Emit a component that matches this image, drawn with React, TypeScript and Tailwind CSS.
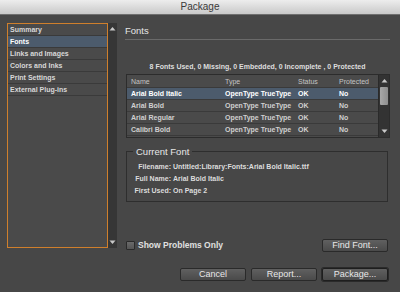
const sections = ['Summary', 'Fonts', 'Links and Images', 'Colors and Inks', 'Print Settings', 'External Plug-ins']

const fonts = [
  { name: 'Arial Bold Italic', type: 'OpenType TrueType', status: 'OK', prot: 'No' },
  { name: 'Arial Bold', type: 'OpenType TrueType', status: 'OK', prot: 'No' },
  { name: 'Arial Regular', type: 'OpenType TrueType', status: 'OK', prot: 'No' },
  { name: 'Calibri Bold', type: 'OpenType TrueType', status: 'OK', prot: 'No' },
]

const Up = () => (
  <svg width="7" height="5" viewBox="0 0 7 5">
    <path d="M0.5 4.5 L3.5 1 L6.5 4.5 Z" fill="#c8c8c8" />
  </svg>
)

const Down = () => (
  <svg width="7" height="5" viewBox="0 0 7 5">
    <path d="M0.5 0.5 L3.5 4 L6.5 0.5 Z" fill="#c8c8c8" />
  </svg>
)

const Button = ({ label, primary }: { label: string; primary?: boolean }) => (
  <button
    className={
      primary
        ? 'w-[66px] h-[13px] flex items-center justify-center rounded-[2px] border border-[#1e1e1e] bg-gradient-to-b from-[#606060] to-[#4a4a4a] text-[9px] leading-none text-[#e8e8e8] shadow-[0_0_0_1px_#2a2a2a]'
        : 'w-[66px] h-[13px] flex items-center justify-center rounded-[2px] border border-[#2a2a2a] bg-gradient-to-b from-[#606060] to-[#4a4a4a] text-[9px] leading-none text-[#e8e8e8]'
    }
  >
    {label}
  </button>
)

export default function App() {
  return (
    <div className="w-[400px] h-[292px] bg-[#474747] flex flex-col font-['Liberation_Sans',Arial,sans-serif] overflow-hidden">
      {/* title bar */}
      <div className="h-[15px] shrink-0 flex items-center justify-center bg-gradient-to-b from-[#ededed] to-[#c9c9c9] border-b border-[#6f6f6f] text-[10px] leading-none text-[#3a3a3a]">
        Package
      </div>

      <div className="flex px-[7px] pt-[8px]">
        {/* left list */}
        <div className="w-[110px] h-[225px] flex shrink-0">
          <div className="w-[101px] h-full border border-[#cf7f2c] bg-[#4a4a4a]">
            {sections.map((s, i) => (
              <div
                key={s}
                className={
                  i === 1
                    ? 'h-[12px] flex items-center pl-[2px] text-[7px] leading-none font-bold text-white bg-[#4c5b6c] border-b border-[#3a3a3a]'
                    : 'h-[12px] flex items-center pl-[2px] text-[7px] leading-none font-bold text-[#d8d8d8] border-b border-[#3a3a3a]'
                }
              >
                {s}
              </div>
            ))}
          </div>
          <div className="w-[9px] h-full bg-[#363636] flex flex-col items-center justify-between py-[3px]">
            <Up />
            <Down />
          </div>
        </div>

        {/* right panel */}
        <div className="ml-[8px] w-[265px] flex flex-col">
          <div className="h-[17px] border-b border-[#6a6a6a] flex items-center text-[9.5px] leading-none text-[#e6e6e6]">
            Fonts
          </div>

          <div className="mt-[21px] h-[10px] flex items-center justify-center text-[7px] leading-none text-[#dedede] font-bold">
            8 Fonts Used, 0 Missing, 0 Embedded, 0 Incomplete , 0 Protected
          </div>

          {/* table */}
          <div className="mt-[3px] ml-[1px] w-[264px] h-[64px] border border-[#2c2c2c] bg-[#4a4a4a] flex">
            <div className="flex-1 flex flex-col">
              <div className="h-[13px] grid grid-cols-[94px_73px_41px_1fr] items-center pl-[4px] text-[7px] leading-none text-[#c4c4c4] border-b border-[#3a3a3a]">
                <span>Name</span>
                <span>Type</span>
                <span>Status</span>
                <span>Protected</span>
              </div>
              {fonts.map((f, i) => (
                <div
                  key={f.name}
                  className={
                    i === 0
                      ? 'h-[12px] grid grid-cols-[94px_73px_41px_1fr] items-center pl-[4px] text-[7px] leading-none font-bold text-white bg-[#4c5b6c] border-b border-[#3a3a3a]'
                      : 'h-[12px] grid grid-cols-[94px_73px_41px_1fr] items-center pl-[4px] text-[7px] leading-none font-bold text-[#d0d0d0] border-b border-[#3a3a3a]'
                  }
                >
                  <span>{f.name}</span>
                  <span className="whitespace-nowrap">{f.type}</span>
                  <span>{f.status}</span>
                  <span>{f.prot}</span>
                </div>
              ))}
            </div>
            <div className="w-[11px] bg-[#333333] border-l border-[#2a2a2a] flex flex-col items-center pt-[3px] pb-[3px]">
              <Up />
              <div className="mt-[4px] w-[8px] h-[18px] rounded-[1px] bg-gradient-to-r from-[#a8a8a8] to-[#8e8e8e]" />
              <div className="flex-1" />
              <Down />
            </div>
          </div>

          {/* current font */}
          <fieldset className="mt-[8px] ml-[1px] w-[262px] border border-[#2e2e2e] pb-[5px]">
            <legend className="ml-[6px] px-[3px] text-[9.5px] leading-[11px] text-[#e6e6e6]">Current Font</legend>
            <div className="mt-[3px] grid grid-cols-[44px_1fr] text-[7px] leading-none font-bold text-[#dcdcdc]">
              <span className="h-[12px] flex items-center justify-end">Filename:</span>
              <span className="h-[12px] flex items-center pl-[2px]">Untitled:Library:Fonts:Arial Bold Italic.ttf</span>
              <span className="h-[12px] flex items-center justify-end">Full Name:</span>
              <span className="h-[12px] flex items-center pl-[2px]">Arial Bold Italic</span>
              <span className="h-[12px] flex items-center justify-end">First Used:</span>
              <span className="h-[12px] flex items-center pl-[2px]">On Page 2</span>
            </div>
          </fieldset>

          <div className="mt-[37px] h-[13px] flex items-center">
            <div className="ml-[1px] w-[9px] h-[9px] rounded-[1px] border border-[#2a2a2a] bg-gradient-to-b from-[#6a6a6a] to-[#555555]" />
            <span className="ml-[3px] text-[8.5px] leading-none font-bold text-[#e0e0e0]">Show Problems Only</span>
            <div className="ml-auto mr-[2px]">
              <Button label="Find Font..." />
            </div>
          </div>
        </div>
      </div>

      <div className="mt-[16px] flex justify-end gap-[5px] pr-[12px]">
        <Button label="Cancel" />
        <Button label="Report..." />
        <Button label="Package..." primary />
      </div>
    </div>
  )
}
